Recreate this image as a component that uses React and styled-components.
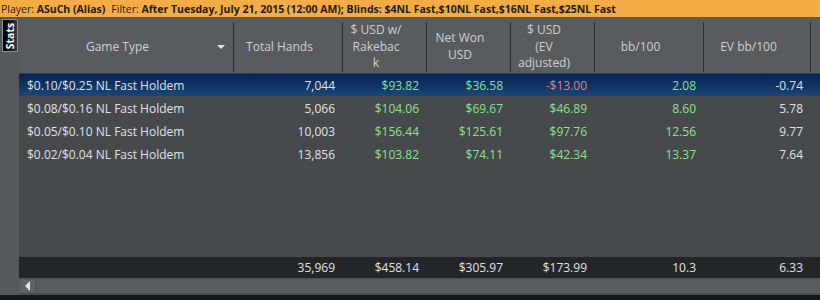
import { styled, createGlobalStyle } from 'styled-components';

const GlobalStyle = createGlobalStyle`
  html, body {
    margin: 0;
    padding: 0;
    background: #15181b;
  }
  body {
    font-family: 'Open Sans', 'DejaVu Sans', sans-serif;
  }
`;

const COLS = '215px 109px 84px 84px 84px 109px 107px 1fr';

const columns = [
  { label: 'Game Type', menu: true },
  { label: 'Total Hands' },
  { label: '$ USD w/\nRakebac\nk' },
  { label: 'Net Won\nUSD' },
  { label: '$ USD\n(EV\nadjusted)' },
  { label: 'bb/100' },
  { label: 'EV bb/100' },
  { label: '' }
];

const rows = [
  {
    game: '$0.10/$0.25 NL Fast Holdem',
    hands: '7,044',
    rb: '$93.82',
    won: '$36.58',
    ev: '-$13.00',
    bb: '2.08',
    evbb: '-0.74',
    selected: true
  },
  {
    game: '$0.08/$0.16 NL Fast Holdem',
    hands: '5,066',
    rb: '$104.06',
    won: '$69.67',
    ev: '$46.89',
    bb: '8.60',
    evbb: '5.78'
  },
  {
    game: '$0.05/$0.10 NL Fast Holdem',
    hands: '10,003',
    rb: '$156.44',
    won: '$125.61',
    ev: '$97.76',
    bb: '12.56',
    evbb: '9.77'
  },
  {
    game: '$0.02/$0.04 NL Fast Holdem',
    hands: '13,856',
    rb: '$103.82',
    won: '$74.11',
    ev: '$42.34',
    bb: '13.37',
    evbb: '7.64'
  }
];

function tone(v) {
  return v.startsWith('-') ? 'neg' : 'pos';
}

function App() {
  return (
    <>
      <GlobalStyle />
      <Frame>
        <FilterBar>
          <span>Player: </span>
          <b>ASuCh (Alias)</b>
          <Gap />
          <span>Filter: </span>
          <b>After Tuesday, July 21, 2015 (12:00 AM); Blinds: $4NL Fast,$10NL Fast,$16NL Fast,$25NL Fast</b>
        </FilterBar>
        <Main>
          <SideStrip>
            <StatsTab>
              <span>Stats</span>
            </StatsTab>
          </SideStrip>
          <Grid>
            <HeaderRow>
              {columns.map((c, i) => (
                <HeaderCell key={i} $last={i === columns.length - 1}>
                  <HeaderText>{c.label}</HeaderText>
                  {c.menu && <MenuArrow />}
                </HeaderCell>
              ))}
            </HeaderRow>
            <Body>
              {rows.map((r) => (
                <Row key={r.game} $selected={r.selected}>
                  <Cell $left>{r.game}</Cell>
                  <Cell>{r.hands}</Cell>
                  <Cell $tone={tone(r.rb)}>{r.rb}</Cell>
                  <Cell $tone={tone(r.won)}>{r.won}</Cell>
                  <Cell $tone={tone(r.ev)}>{r.ev}</Cell>
                  <Cell $tone={tone(r.bb)}>{r.bb}</Cell>
                  <Cell>{r.evbb}</Cell>
                  <Cell />
                </Row>
              ))}
            </Body>
            <TotalsRow>
              <Cell />
              <Cell>35,969</Cell>
              <Cell>$458.14</Cell>
              <Cell>$305.97</Cell>
              <Cell>$173.99</Cell>
              <Cell>10.3</Cell>
              <Cell>6.33</Cell>
              <Cell />
            </TotalsRow>
            <ScrollBar>
              <ScrollButton>
                <svg width="6" height="10" viewBox="0 0 6 10">
                  <path d="M5 0 L0 5 L5 10 Z" fill="#e6e6e6" />
                </svg>
              </ScrollButton>
            </ScrollBar>
          </Grid>
        </Main>
      </Frame>
    </>
  );
}

const Frame = styled.div`
  display: flex;
  flex-direction: column;
  width: 820px;
  height: 300px;
  overflow: hidden;
  background: #15181b;
`;

const FilterBar = styled.div`
  height: 17px;
  flex: none;
  display: flex;
  align-items: center;
  padding-left: 1px;
  background: #f4ad46;
  color: #1c1a16;
  font-size: 10.5px;
  white-space: pre;
  b {
    font-weight: 700;
  }
`;

const Gap = styled.span`
  width: 6px;
`;

const Main = styled.div`
  display: flex;
  height: 278px;
  flex: none;
`;

const SideStrip = styled.div`
  width: 19px;
  flex: none;
  background: #56595c;
  padding-top: 2px;
  box-sizing: border-box;
`;

const StatsTab = styled.div`
  width: 16px;
  height: 33px;
  margin-left: 2px;
  box-sizing: border-box;
  border: 1px solid #8c8f91;
  background: linear-gradient(to right, #000 0%, #1a1a1a 60%, #3a3a3a 100%);
  display: flex;
  align-items: center;
  justify-content: center;
  span {
    transform: rotate(-90deg);
    color: #fff;
    font-size: 10.5px;
    font-weight: 700;
  }
`;

const Grid = styled.div`
  flex: 1;
  display: flex;
  flex-direction: column;
  min-width: 0;
`;

const HeaderRow = styled.div`
  height: 57px;
  flex: none;
  display: grid;
  grid-template-columns: ${COLS};
  background: #585c5f;
  border-bottom: 1px solid #3b3e41;
  box-sizing: border-box;
`;

const HeaderCell = styled.div`
  display: flex;
  align-items: center;
  justify-content: center;
  margin: 5px 0 3px;
  padding-right: 17px;
  border-right: ${(p) => (p.$last ? 'none' : '1px solid #2c2f31')};
  position: relative;
`;

const HeaderText = styled.div`
  color: #cfd0d1;
  font-size: 12px;
  line-height: 16.5px;
  text-align: center;
  white-space: pre;
`;

const MenuArrow = styled.div`
  position: absolute;
  right: 8px;
  top: 23px;
  width: 0;
  height: 0;
  border-left: 4px solid transparent;
  border-right: 4px solid transparent;
  border-top: 4px solid #e4e4e4;
`;

const Body = styled.div`
  flex: 1;
  background: #46494c;
  display: flex;
  flex-direction: column;
  gap: 1px;
`;

const Row = styled.div`
  display: grid;
  grid-template-columns: ${COLS};
  height: 22px;
  align-items: center;
  background: ${(p) =>
    p.$selected ? 'linear-gradient(to bottom, #072455 0%, #0f3263 50%, #1b4777 100%)' : 'transparent'};
`;

const toneColor = {
  pos: '#8fe38c',
  neg: '#ec7a7e'
};

const Cell = styled.div`
  font-size: 12px;
  color: ${(p) => (p.$tone ? toneColor[p.$tone] : '#e2e3e4')};
  text-align: ${(p) => (p.$left ? 'left' : 'right')};
  padding: ${(p) => (p.$left ? '0 0 0 8px' : '0 8px 0 0')};
  white-space: nowrap;
`;

const TotalsRow = styled.div`
  height: 21px;
  flex: none;
  display: grid;
  grid-template-columns: ${COLS};
  align-items: center;
  background: #222629;
`;

const ScrollBar = styled.div`
  height: 17px;
  flex: none;
  box-sizing: border-box;
  background: #585c5f;
  border-top: 1px solid #4d5154;
  border-bottom: 2px solid #494d50;
  display: flex;
  align-items: stretch;
  padding: 1px 0 1px 1px;
`;

const ScrollButton = styled.div`
  width: 16px;
  box-sizing: border-box;
  background: #5f6366;
  border-right: 1px solid #4a4e51;
  display: flex;
  align-items: center;
  justify-content: center;
`;

export default App;
